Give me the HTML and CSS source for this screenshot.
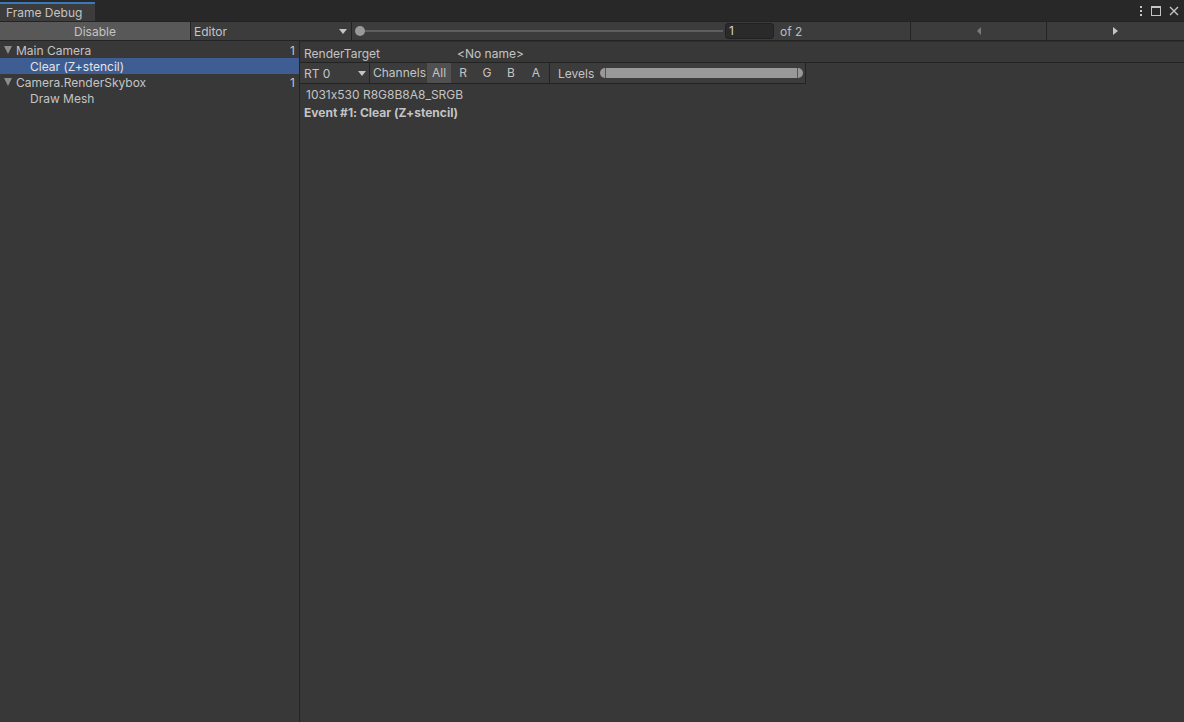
FILE: index.html
```html
<!DOCTYPE html>
<html>
<head>
<meta charset="utf-8">
<link rel="stylesheet" href="styles.css">
</head>
<body>
<div class="window">
  <div class="tabbar">
    <div class="tab">Frame Debug</div>
    <div class="tab-fill"></div>
    <div class="win-icons">
      <svg width="6" height="12" viewBox="0 0 6 12"><rect x="2" y="1" width="2" height="2" fill="#c4c4c4"/><rect x="2" y="5" width="2" height="2" fill="#c4c4c4"/><rect x="2" y="9" width="2" height="2" fill="#c4c4c4"/></svg>
      <svg width="12" height="12" viewBox="0 0 12 12"><rect x="1.5" y="1.5" width="9" height="9" fill="none" stroke="#c4c4c4" stroke-width="1"/><rect x="1" y="1" width="10" height="2" fill="#c4c4c4"/></svg>
      <svg width="12" height="12" viewBox="0 0 12 12"><path d="M2 2 L10 10 M10 2 L2 10" stroke="#c4c4c4" stroke-width="1.4"/></svg>
    </div>
  </div>
  <div class="toolbar">
    <div class="btn-disable">Disable</div>
    <div class="dropdown editor"><span>Editor</span><span class="caret"></span></div>
    <div class="slider-area">
      <div class="slider"><div class="track"></div><div class="thumb"></div></div>
      <div class="num-input">1</div>
      <div class="of">of 2</div>
    </div>
    <div class="nav-btn"><span class="arrow-left"></span></div>
    <div class="nav-btn last"><span class="arrow-right"></span></div>
  </div>
  <div class="main">
    <div class="tree">
      <div class="row"><span class="fold"></span><span class="label">Main Camera</span><span class="count">1</span></div>
      <div class="row selected child"><span class="label">Clear (Z+stencil)</span></div>
      <div class="row"><span class="fold"></span><span class="label">Camera.RenderSkybox</span><span class="count">1</span></div>
      <div class="row child"><span class="label">Draw Mesh</span></div>
    </div>
    <div class="detail">
      <div class="rt-row"><span class="rt-label">RenderTarget</span><span class="rt-name">&lt;No name&gt;</span></div>
      <div class="rt-toolbar">
        <div class="dropdown rt"><span>RT 0</span><span class="caret"></span></div>
        <div class="channels">Channels</div>
        <div class="ch on">All</div>
        <div class="ch">R</div>
        <div class="ch">G</div>
        <div class="ch">B</div>
        <div class="ch ch-last">A</div>
        <div class="levels">
          <span>Levels</span>
          <div class="minmax"><span class="cap l"></span><span class="bar"></span><span class="cap r"></span></div>
        </div>
      </div>
      <div class="info">1031x530 R8G8B8A8_SRGB</div>
      <div class="event">Event #1: Clear (Z+stencil)</div>
    </div>
  </div>
</div>
</body>
</html>
```

FILE: styles.css
```css
* { box-sizing: border-box; }
html, body { margin: 0; padding: 0; }
body {
  width: 1184px;
  height: 722px;
  overflow: hidden;
  background: #383838;
  font-family: Inter, "Noto Sans", sans-serif;
  font-size: 12px;
  color: #c4c4c4;
  font-feature-settings: "calt" 0;
}
.window { display: flex; flex-direction: column; height: 722px; }

.tabbar {
  height: 21px;
  background: #282828;
  display: flex;
  align-items: stretch;
}
.tab {
  width: 95px;
  margin-top: 2px;
  background: #3c3c3c;
  border-top: 2px solid #3a79bb;
  padding-left: 6px;
  line-height: 17px;
  color: #c4c4c4;
}
.tab-fill { flex: 1; }
.win-icons {
  display: flex;
  align-items: center;
  gap: 6px;
  padding-right: 4px;
}

.toolbar {
  height: 20px;
  background: #3c3c3c;
  border-top: 1px solid #232323;
  border-bottom: 1px solid #232323;
  display: flex;
  align-items: stretch;
}
.btn-disable {
  width: 191px;
  background: #585858;
  border-right: 1px solid #232323;
  text-align: center;
  line-height: 18px;
  padding-top: 1px;
}
.dropdown {
  display: flex;
  align-items: center;
  justify-content: space-between;
  padding: 1px 4px 0 3px;
  border-right: 1px solid #232323;
}
.editor { width: 161px; }
.caret {
  width: 0; height: 0;
  border-left: 4px solid transparent;
  border-right: 4px solid transparent;
  border-top: 5px solid #c4c4c4;
}
.slider-area {
  width: 559px;
  display: flex;
  align-items: center;
  border-right: 1px solid #232323;
}
.slider {
  position: relative;
  width: 368px;
  height: 18px;
  margin-left: 3px;
}
.track {
  position: absolute;
  left: 4px; right: 0;
  top: 8px;
  height: 2px;
  background: #5e5e5e;
}
.thumb {
  position: absolute;
  left: 0; top: 4px;
  width: 10px; height: 10px;
  border-radius: 50%;
  background: #999999;
}
.num-input {
  margin-left: 2px;
  width: 49px;
  height: 16px;
  background: #2a2a2a;
  border: 1px solid #212121;
  border-radius: 3px;
  padding-left: 3px;
  line-height: 14px;
  color: #d2d2d2;
}
.of { margin-left: 6px; color: #bcbcbc; padding-top: 1px; }
.nav-btn {
  width: 136px;
  display: flex;
  align-items: center;
  justify-content: center;
  border-right: 1px solid #232323;
}
.nav-btn.last { border-right: none; flex: 1; }
.arrow-left {
  width: 0; height: 0;
  border-top: 4px solid transparent;
  border-bottom: 4px solid transparent;
  border-right: 4px solid #7a7a7a;
}
.arrow-right {
  width: 0; height: 0;
  border-top: 4px solid transparent;
  border-bottom: 4px solid transparent;
  border-left: 5px solid #c4c4c4;
}

.main { flex: 1; display: flex; }
.tree {
  width: 300px;
  border-right: 1px solid #232323;
  padding-top: 1px;
}
.row {
  height: 16px;
  display: flex;
  align-items: center;
  padding-left: 4px;
  padding-right: 4px;
}
.row.child { padding-left: 30px; }
.row.selected { background: #3d5d93; color: #e4e4e4; }
.fold {
  width: 0; height: 0;
  border-left: 4px solid transparent;
  border-right: 4px solid transparent;
  border-top: 8px solid #8c8c8c;
  margin-right: 4px;
}
.label { flex: 1; }
.count { color: #c4c4c4; }

.detail { flex: 1; display: flex; flex-direction: column; }
.rt-row {
  height: 22px;
  display: flex;
  align-items: center;
  padding-left: 4px;
  padding-top: 3px;
  border-top: 1px solid #2e2e2e;
  border-bottom: 1px solid #232323;
}
.rt-label { width: 153px; }
.rt-toolbar {
  height: 21px;
  width: 506px;
  display: flex;
  align-items: stretch;
  background: #3c3c3c;
  border-bottom: 1px solid #232323;
  border-right: 1px solid #232323;
}
.rt { width: 70px; padding-left: 4px; padding-right: 3px; }
.channels { padding-left: 3px; width: 57px; line-height: 20px; }
.ch { width: 24px; text-align: center; line-height: 20px; }
.ch.on { background: #505050; }
.ch.ch-last { width: 27px; border-right: 1px solid #232323; }
.levels {
  flex: 1;
  display: flex;
  align-items: center;
  padding-left: 8px;
}
.minmax { display: flex; align-items: center; margin-left: 6px; height: 10px; }
.cap {
  width: 6px; height: 10px;
  background: #999999;
}
.cap.l { border-radius: 5px 0 0 5px; border-right: 1px solid #555; }
.cap.r { border-radius: 0 5px 5px 0; border-left: 1px solid #555; }
.bar { width: 191px; height: 10px; background: #999999; }

.info { padding-left: 6px; margin-top: 3px; line-height: 16px; }
.event { padding-left: 4px; margin-top: 2px; line-height: 16px; font-weight: 700; }
```
